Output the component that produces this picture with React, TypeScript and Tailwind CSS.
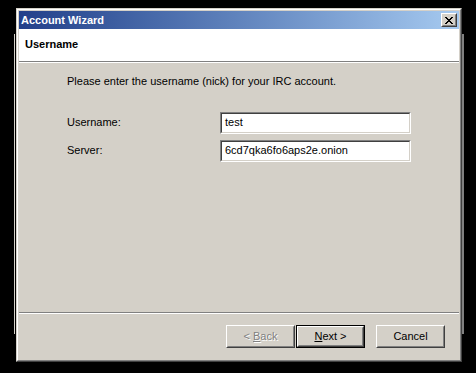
import React from 'react';

const xRows = ['XX....XX', '.XX..XX.', '..XXXX..', '...XX...', '..XXXX..', '.XX..XX.', 'XX....XX'];

const CloseGlyph = () => (
    <svg width="8" height="7" viewBox="0 0 8 7" shapeRendering="crispEdges">
        {xRows.map((row, y) =>
            row.split('').map((c, x) =>
                c === 'X' ? <rect key={`${x}-${y}`} x={x} y={y} width="1" height="1" fill="#000" /> : null
            )
        )}
    </svg>
);

const Raised = ({ children, className = '' }: { children: React.ReactNode; className?: string }) => (
    <div className={`border border-t-white border-l-white border-r-[#404040] border-b-[#404040] ${className}`}>
        <div className="w-full h-full border border-t-[#d4d0c8] border-l-[#d4d0c8] border-r-[#808080] border-b-[#808080] flex items-center justify-center">
            {children}
        </div>
    </div>
);

const Field = ({ label, value }: { label: string; value: string }) => (
    <div className="flex items-center h-[22px]">
        <div className="w-[153px]">{label}</div>
        <div className="w-[191px] h-[22px] border border-t-[#808080] border-l-[#808080] border-r-white border-b-white">
            <div className="w-full h-full border border-t-[#404040] border-l-[#404040] border-r-[#d4d0c8] border-b-[#d4d0c8] bg-white flex items-center pl-[3px]">
                {value}
            </div>
        </div>
    </div>
);

export default function App() {
    return (
        <div className="relative w-[476px] h-[373px] bg-black overflow-hidden font-['Liberation_Sans',Arial,sans-serif] text-[11px] text-black">
            {/* window behind the wizard */}
            <div className="absolute left-[14px] top-[34px] w-[450px] h-[300px] border-l border-l-[#d4d0c8] border-r-2 border-r-[#808080]" />

            {/* wizard window */}
            <div className="absolute left-[16px] top-[8px] w-[446px] h-[354px] border border-t-[#d4d0c8] border-l-[#d4d0c8] border-r-[#404040] border-b-[#404040]">
                <div className="w-full h-full border border-t-white border-l-white border-r-[#808080] border-b-[#808080] p-px bg-[#d4d0c8] flex flex-col">
                    <div className="h-[18px] flex items-center justify-between pl-[2px] pr-[2px] bg-gradient-to-r from-[#23408a] to-[#a6caf0]">
                        <span className="text-white font-bold">Account Wizard</span>
                        <Raised className="w-[16px] h-[14px] bg-[#d4d0c8]">
                            <CloseGlyph />
                        </Raised>
                    </div>

                    <div className="h-[32px] bg-white flex items-center pl-[6px] pb-px font-bold">Username</div>
                    <div className="h-px bg-[#808080]" />
                    <div className="h-px bg-white" />

                    <div className="flex-1 flex flex-col pl-[48px] pt-[10px]">
                        <p>Please enter the username (nick) for your IRC account.</p>
                        <div className="mt-[22px] flex flex-col gap-[6px]">
                            <Field label="Username:" value="test" />
                            <Field label="Server:" value="6cd7qka6fo6aps2e.onion" />
                        </div>
                    </div>

                    <div className="h-px bg-[#808080]" />
                    <div className="h-px bg-white" />

                    <div className="flex justify-end items-center pt-[11px] pb-[11px] pr-[14px]">
                        <Raised className="w-[69px] h-[23px]">
                            <span className="text-[#808080] [text-shadow:1px_1px_0_#fff]">
                                &lt; <span className="underline">B</span>ack
                            </span>
                        </Raised>
                        <div className="ml-px w-[69px] h-[23px] border border-black">
                            <Raised className="w-full h-full">
                                <span>
                                    <span className="underline">N</span>ext &gt;
                                </span>
                            </Raised>
                        </div>
                        <Raised className="ml-[11px] w-[69px] h-[23px]">
                            <span>Cancel</span>
                        </Raised>
                    </div>
                </div>
            </div>
        </div>
    );
}
